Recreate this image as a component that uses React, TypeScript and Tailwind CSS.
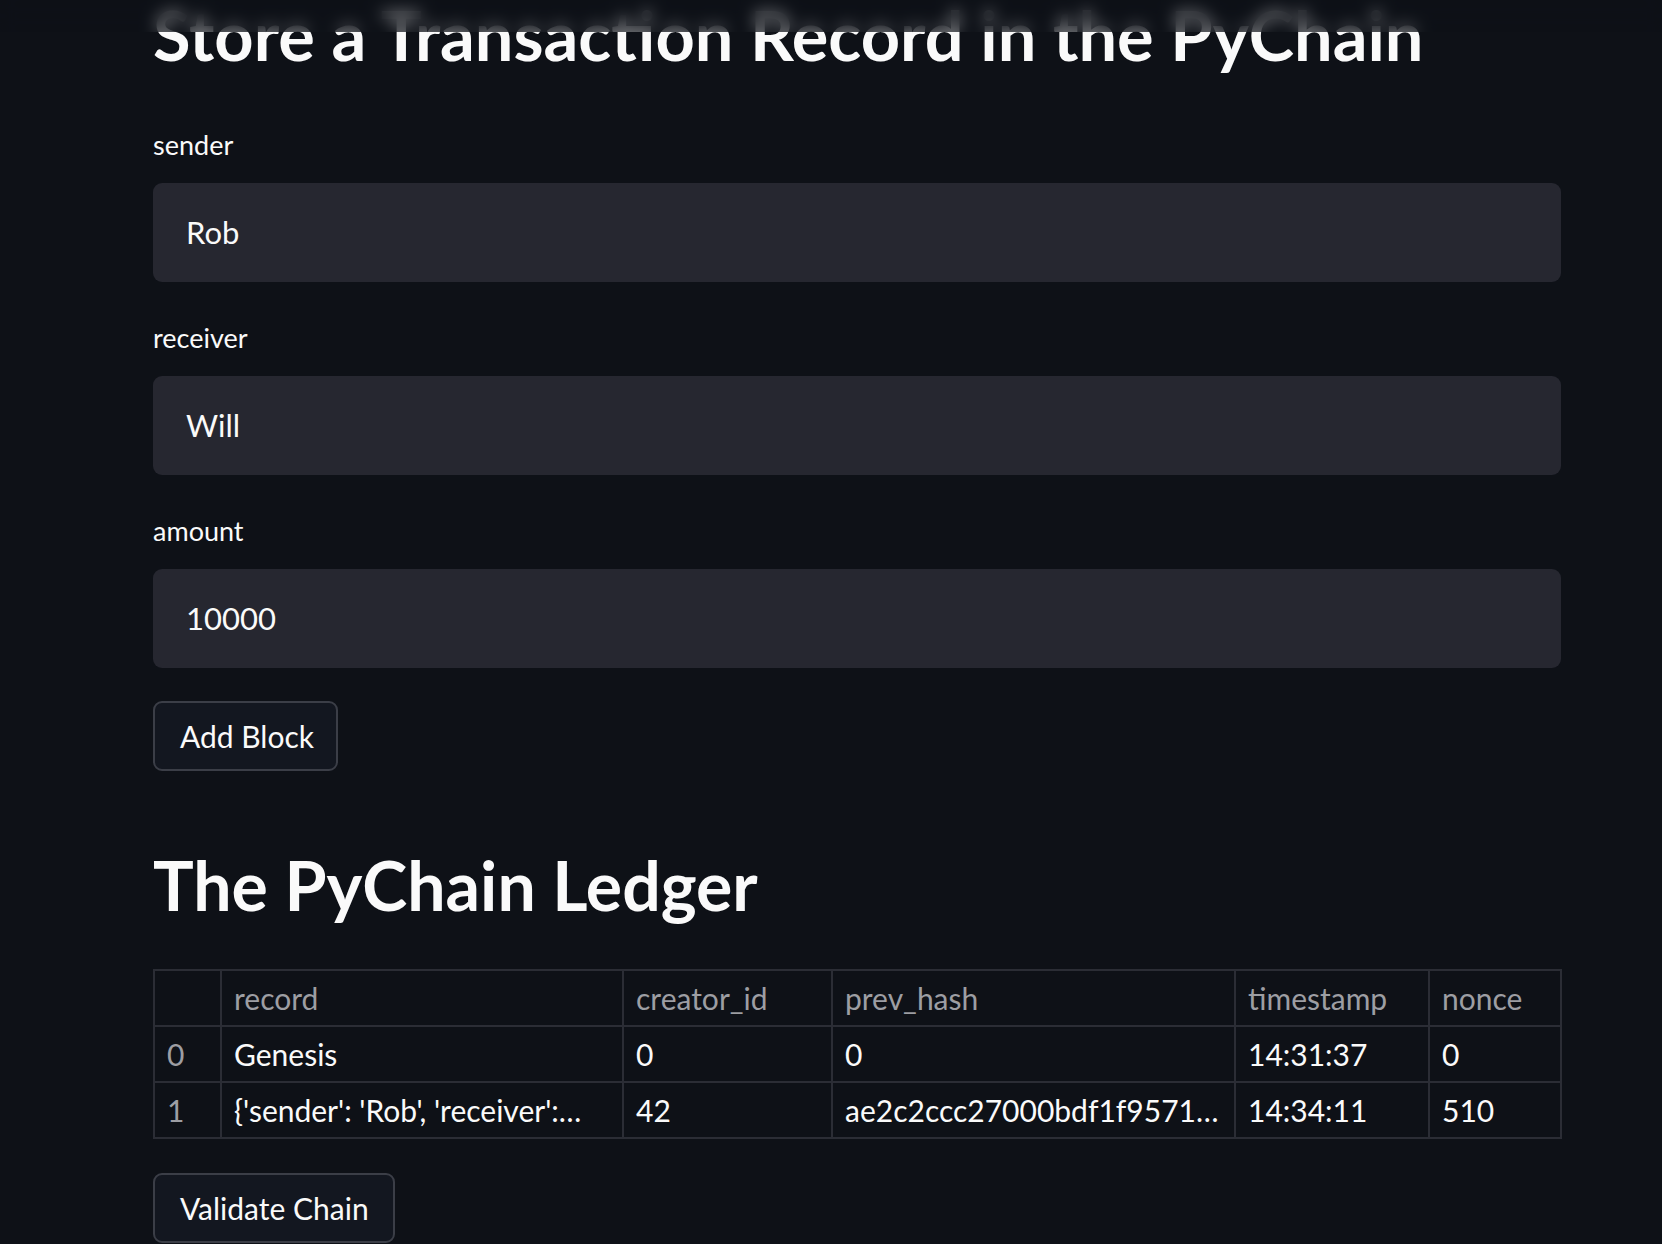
import React from "react";

const font = { fontFamily: "Lato, 'Noto Sans', sans-serif" };

const fields = [
  { label: "sender", value: "Rob" },
  { label: "receiver", value: "Will" },
  { label: "amount", value: "10000" },
];

const rows = [
  { idx: "0", record: "Genesis", creator: "0", prev: "0", ts: "14:31:37", nonce: "0" },
  {
    idx: "1",
    record: "{'sender': 'Rob', 'receiver':…",
    creator: "42",
    prev: "ae2c2ccc27000bdf1f9571…",
    ts: "14:34:11",
    nonce: "510",
  },
];

function Field({ label, value }: { label: string; value: string }) {
  return (
    <div className="flex flex-col">
      <div className="text-[27px] leading-[28px] text-[#fafafa] mb-[24px]">{label}</div>
      <div className="h-[99px] rounded-[9px] bg-[#262730] flex items-center pl-[33px] text-[31px] text-[#fafafa]">
        {value}
      </div>
    </div>
  );
}

function Button({ children, w }: { children: React.ReactNode; w: string }) {
  return (
    <button
      className={`h-[70px] ${w} rounded-[9px] border-2 border-[#3b3e47] bg-[#131720] text-[30px] text-[#fafafa] flex items-center pl-[25px]`}
    >
      {children}
    </button>
  );
}

export default function App() {
  return (
    <div className="min-h-screen w-full bg-[#0e1117] overflow-hidden relative" style={font}>
      <div className="absolute top-0 left-0 right-0 h-[32px] bg-[#0e1117]/60 backdrop-blur-sm z-10" />
      <div className="ml-[153px] w-[1408px] flex flex-col">
        <h1 className="text-[68.5px] leading-[70px] font-bold text-[#fafafa] whitespace-nowrap">
          Store a Transaction Record in the PyChain
        </h1>

        <div className="mt-[61px] flex flex-col gap-[42px]">
          {fields.map(f => (
            <Field key={f.label} label={f.label} value={f.value} />
          ))}
        </div>

        <div className="mt-[33px]">
          <Button w="w-[185px]">Add Block</Button>
        </div>

        <h2 className="mt-[79px] text-[68px] leading-[69px] font-bold text-[#fafafa] whitespace-nowrap">
          The PyChain Ledger
        </h2>

        <table className="mt-[50px] w-[1407px] border-collapse text-[30px] table-fixed">
          <colgroup>
            <col className="w-[67px]" />
            <col className="w-[402px]" />
            <col className="w-[209px]" />
            <col className="w-[403px]" />
            <col className="w-[194px]" />
            <col className="w-[132px]" />
          </colgroup>
          <thead>
            <tr className="h-[56px]">
              <th className="border-2 border-[#2b2d35]" />
              {["record", "creator_id", "prev_hash", "timestamp", "nonce"].map(h => (
                <th
                  key={h}
                  className="border-2 border-[#2b2d35] text-left font-normal text-[#9d9ea3] px-[12px] whitespace-nowrap"
                >
                  {h}
                </th>
              ))}
            </tr>
          </thead>
          <tbody>
            {rows.map(r => (
              <tr key={r.idx} className="h-[56px]">
                <td className="border-2 border-[#2b2d35] text-[#9d9ea3] px-[12px]">{r.idx}</td>
                <td className="border-2 border-[#2b2d35] text-[#fafafa] px-[12px] whitespace-nowrap overflow-hidden">{r.record}</td>
                <td className="border-2 border-[#2b2d35] text-[#fafafa] px-[12px]">{r.creator}</td>
                <td className="border-2 border-[#2b2d35] text-[#fafafa] px-[12px] whitespace-nowrap overflow-hidden">{r.prev}</td>
                <td className="border-2 border-[#2b2d35] text-[#fafafa] px-[12px]">{r.ts}</td>
                <td className="border-2 border-[#2b2d35] text-[#fafafa] px-[12px]">{r.nonce}</td>
              </tr>
            ))}
          </tbody>
        </table>

        <div className="mt-[34px]">
          <Button w="w-[242px]">Validate Chain</Button>
        </div>
      </div>
    </div>
  );
}
